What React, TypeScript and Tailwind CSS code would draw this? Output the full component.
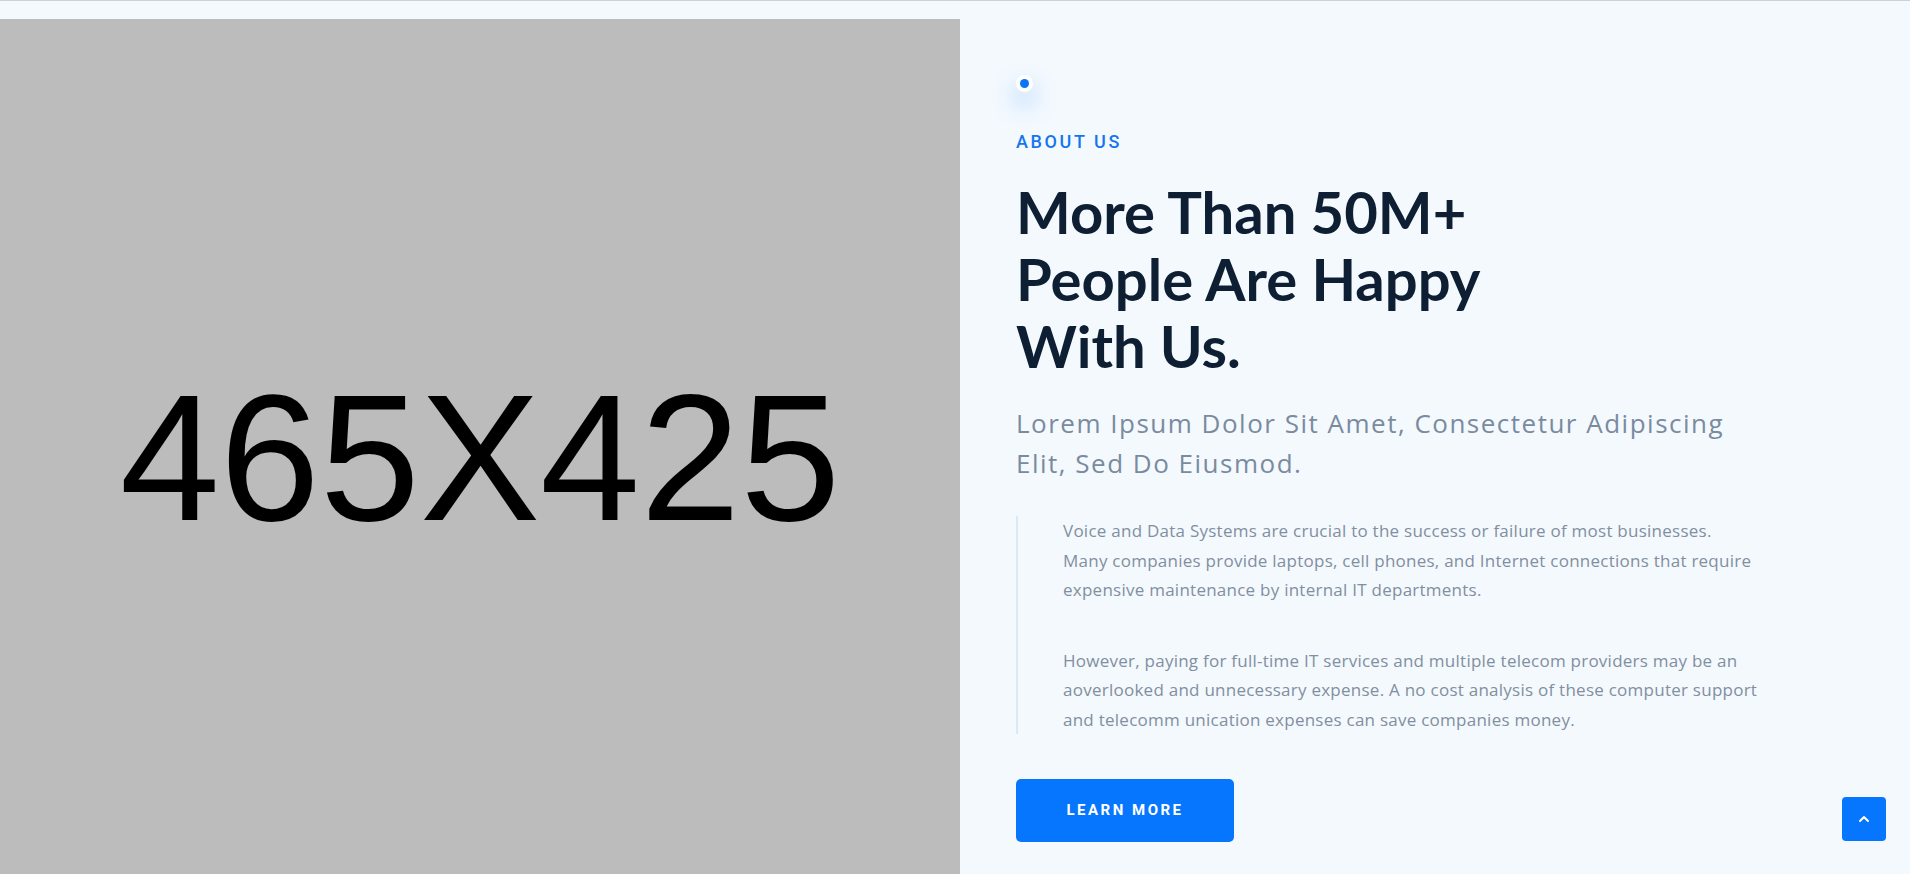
import { ChevronUp } from 'lucide-react'

const AboutImage = () => (
  <div className="w-[960px] h-[877px] shrink-0 bg-[#bcbcbc] flex items-center justify-center">
    <span className="font-['Liberation_Sans',Arial,sans-serif] text-[180px] leading-none text-black">465X425</span>
  </div>
)

export default function App() {
  return (
    <div className="min-h-screen bg-[#f4f9fe] border-t border-[#c9d2db] pt-[18px] overflow-hidden font-['Open_Sans',sans-serif]">
      <section className="flex">
        <AboutImage />

        <div className="flex-1 pl-[56px] pt-[56px]">
          {/* dot badge */}
          <div className="w-[17px] h-[17px] rounded-full bg-white flex items-center justify-center shadow-[0_12px_24px_rgba(7,118,255,0.4)]">
            <span className="w-[9px] h-[9px] rounded-full bg-[#0a74f5]" />
          </div>

          <p className="mt-[41px] font-['Roboto',sans-serif] font-medium text-[18px] leading-none tracking-[2.6px] text-[#1675ee]">
            ABOUT US
          </p>

          <h2 className="mt-[27px] font-['Lato',sans-serif] text-[58px] leading-[67px] font-bold text-[#0e1f33]">
            More Than 50M+
            <br />
            People Are Happy
            <br />
            With Us.
          </h2>

          <p className="mt-[24px] max-w-[730px] text-[26px] leading-[40px] tracking-[1.5px] text-[#7a8b9f]">
            Lorem Ipsum Dolor Sit Amet, Consectetur Adipiscing Elit, Sed Do Eiusmod.
          </p>

          <div className="mt-[33px] border-l-2 border-[#d6eaf8] pl-[45px] max-w-[746px] text-[17px] leading-[29.5px] tracking-[0.25px] text-[#828fa0]">
            <p className="max-w-[690px]">
              Voice and Data Systems are crucial to the success or failure of most businesses. Many companies provide
              laptops, cell phones, and Internet connections that require expensive maintenance by internal IT
              departments.
            </p>
            <p className="mt-[41px]">
              However, paying for full-time IT services and multiple telecom providers may be an aoverlooked and
              unnecessary expense. A no cost analysis of these computer support and telecomm unication expenses can
              save companies money.
            </p>
          </div>

          <button className="mt-[45px] w-[218px] h-[63px] rounded-[5px] bg-[#0776ff] text-white font-['Roboto',sans-serif] font-bold text-[15px] tracking-[2.5px]">
            LEARN MORE
          </button>
        </div>
      </section>

      <button className="fixed right-[24px] bottom-[33px] w-[44px] h-[44px] rounded-[4px] bg-[#0776ff] text-white flex items-center justify-center">
        <ChevronUp size={16} strokeWidth={3} />
      </button>
    </div>
  )
}
